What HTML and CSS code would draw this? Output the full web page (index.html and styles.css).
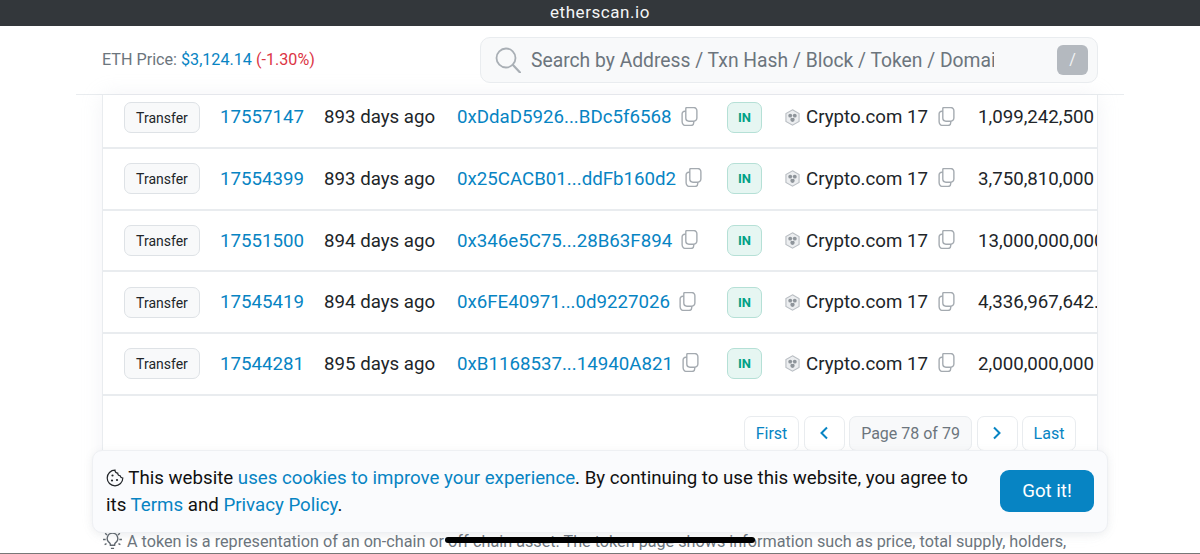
FILE: index.html
```html
<!DOCTYPE html>
<html lang="en">
<head>
<meta charset="utf-8">
<title>etherscan.io</title>
<link rel="stylesheet" href="styles.css">
</head>
<body>
<svg class="defs" width="0" height="0" aria-hidden="true">
  <symbol id="copy" viewBox="0.500 1 16 18">
    <path d="M6 1.500h6.500a3 3 0 0 1 3 3v7a3 3 0 0 1-3 3H8a3 3 0 0 1-3-3V2.500a1 1 0 0 1 1-1z" fill="none" stroke="#a4aab0" stroke-width="1.300"/>
    <path d="M5 5H4a2.500 2.500 0 0 0-2.500 2.500V15A3.500 3.500 0 0 0 5 18.500h5a2.500 2.500 0 0 0 2.500-2.500v-1.500" fill="none" stroke="#a4aab0" stroke-width="1.300"/>
  </symbol>
  <symbol id="cro" viewBox="0 0 16 18">
    <path d="M8 .8l7 4v8.400l-7 4-7-4V4.800z" fill="#eceef0" stroke="#b9bec3" stroke-width="1.200"/>
    <circle cx="5.600" cy="7" r="2.100" fill="#8f959b"/>
    <circle cx="10.400" cy="7" r="2.100" fill="#8f959b"/>
    <circle cx="8" cy="11.400" r="2.300" fill="#8f959b"/>
    <circle cx="8" cy="8.600" r="1" fill="#eceef0"/>
  </symbol>
</svg>

<div class="status-bar">etherscan.io</div>

<header class="site-header">
  <div class="price">ETH Price: <a class="link">$3,124.14</a> <span class="down">(-1.30%)</span></div>
  <div class="search">
    <svg class="search-icon" viewBox="0 0 26 26" width="26" height="26"><circle cx="11" cy="11" r="9.500" fill="none" stroke="#a9afb5" stroke-width="1.800"/><path d="M18 18l7 7.500" stroke="#a9afb5" stroke-width="2.200" stroke-linecap="round"/></svg>
    <span class="search-text">Search by Address / Txn Hash / Block / Token / Domain Name</span>
    <span class="slash">/</span>
  </div>
</header>

<main class="card">
  <div class="row row-first">
    <span class="method">Transfer</span>
    <a class="link">17557147</a>
    <span>893 days ago</span>
    <span class="hash"><a class="link">0xDdaD5926...BDc5f6568</a><svg class="copy"><use href="#copy"/></svg></span>
    <span class="in">IN</span>
    <span class="token"><svg class="cro"><use href="#cro"/></svg>Crypto.com 17<svg class="copy copy-token"><use href="#copy"/></svg></span>
    <span class="amount">1,099,242,500</span>
  </div>
  <div class="row">
    <span class="method">Transfer</span>
    <a class="link">17554399</a>
    <span>893 days ago</span>
    <span class="hash"><a class="link">0x25CACB01...ddFb160d2</a><svg class="copy"><use href="#copy"/></svg></span>
    <span class="in">IN</span>
    <span class="token"><svg class="cro"><use href="#cro"/></svg>Crypto.com 17<svg class="copy copy-token"><use href="#copy"/></svg></span>
    <span class="amount">3,750,810,000</span>
  </div>
  <div class="row">
    <span class="method">Transfer</span>
    <a class="link">17551500</a>
    <span>894 days ago</span>
    <span class="hash"><a class="link">0x346e5C75...28B63F894</a><svg class="copy"><use href="#copy"/></svg></span>
    <span class="in">IN</span>
    <span class="token"><svg class="cro"><use href="#cro"/></svg>Crypto.com 17<svg class="copy copy-token"><use href="#copy"/></svg></span>
    <span class="amount">13,000,000,000</span>
  </div>
  <div class="row">
    <span class="method">Transfer</span>
    <a class="link">17545419</a>
    <span>894 days ago</span>
    <span class="hash"><a class="link">0x6FE40971...0d9227026</a><svg class="copy"><use href="#copy"/></svg></span>
    <span class="in">IN</span>
    <span class="token"><svg class="cro"><use href="#cro"/></svg>Crypto.com 17<svg class="copy copy-token"><use href="#copy"/></svg></span>
    <span class="amount">4,336,967,642.5</span>
  </div>
  <div class="row">
    <span class="method">Transfer</span>
    <a class="link">17544281</a>
    <span>895 days ago</span>
    <span class="hash"><a class="link">0xB1168537...14940A821</a><svg class="copy"><use href="#copy"/></svg></span>
    <span class="in">IN</span>
    <span class="token"><svg class="cro"><use href="#cro"/></svg>Crypto.com 17<svg class="copy copy-token"><use href="#copy"/></svg></span>
    <span class="amount">2,000,000,000</span>
  </div>
  <nav class="pager">
    <a class="page-btn link page-first">First</a>
    <a class="page-btn link page-arrow"><svg viewBox="0 0 10 14" width="10" height="14"><path d="M8 1.500L2.500 7 8 12.500" fill="none" stroke="#0784c3" stroke-width="2"/></svg></a>
    <span class="page-btn page-current">Page 78 of 79</span>
    <a class="page-btn link page-arrow"><svg viewBox="0 0 10 14" width="10" height="14"><path d="M2 1.500L7.500 7 2 12.500" fill="none" stroke="#0784c3" stroke-width="2"/></svg></a>
    <a class="page-btn link page-last">Last</a>
  </nav>
</main>

<p class="tip">
  <svg class="bulb" viewBox="0 1 20 18" width="21" height="19"><path d="M10 3a5 5 0 0 0-3 9c.8.700 1 1.200 1 2.500h4c0-1.300.2-1.800 1-2.500a5 5 0 0 0-3-9zM8.500 17.500h3" fill="none" stroke="#5f676e" stroke-width="1.300"/><path d="M1 9h2.500M16.500 9H19M3 3l1.800 1.800M17 3l-1.800 1.800M2.500 14l1.800-1M17.500 14l-1.800-1" stroke="#5f676e" stroke-width="1.300"/></svg>
  A token is a representation of an on-chain or off-chain asset. The token page shows information such as price, total supply, holders, transfers and social links.
</p>

<div class="cookie">
  <p class="cookie-text"><svg class="cookie-icon" viewBox="0 0 18 18" width="18" height="18"><path d="M9 1.200a2.800 2.800 0 0 0 2.700 3 2.800 2.800 0 0 0 2.500 2.600A2.800 2.800 0 0 0 16.800 9 7.800 7.800 0 1 1 9 1.200z" fill="none" stroke="#212529" stroke-width="1.200"/><circle cx="6.500" cy="6.500" r="1.100" fill="#212529"/><circle cx="11" cy="11" r="1.100" fill="#212529"/><circle cx="6" cy="11.500" r="1.100" fill="#212529"/></svg> This website <a class="link">uses cookies to improve your experience</a>. By continuing to use this website, you agree to its <a class="link">Terms</a> and <a class="link">Privacy Policy</a>.</p>
  <button class="got-it">Got it!</button>
</div>

<div class="home-indicator"></div>
<div class="bottom-line"></div>
</body>
</html>
```

FILE: styles.css
```css
* { box-sizing: border-box; }
html, body { height: 100%; }
body {
  margin: 0;
  height: 554px;
  overflow: hidden;
  position: relative;
  background: #fff;
  color: #212529;
  font-family: Roboto, "Liberation Sans", sans-serif;
  font-size: 18.700px;
}
.defs { position: absolute; }
.link { color: #0784c3; text-decoration: none; }

.status-bar {
  height: 26px;
  background: #33373b;
  color: #f4f5f6;
  font-size: 17px;
  line-height: 25px;
  letter-spacing: .55px;
  text-align: center;
}

.site-header {
  margin: 0 76px;
  height: 69px;
  padding: 11px 26px;
  border-bottom: 1px solid #e9ecef;
  display: flex;
  justify-content: space-between;
  align-items: flex-start;
}
.price {
  font-size: 16.150px;
  line-height: 46px;
  color: #6c757d;
}
.down { color: #dc3545; }
.search {
  width: 618px;
  height: 46px;
  background: #f8f9fa;
  border: 1px solid #e9ecef;
  border-radius: 10px;
  display: flex;
  align-items: center;
  padding: 0 9px 0 14px;
}
.search-icon { flex: none; margin-right: 10px; }
.search-text {
  width: 463px;
  white-space: nowrap;
  overflow: hidden;
  font-size: 19.300px;
  color: #6c757d;
}
.slash {
  margin-left: auto;
  width: 31px;
  height: 30px;
  border-radius: 6px;
  background: #b4b9bf;
  color: #f2f3f4;
  font-size: 16px;
  line-height: 30px;
  text-align: center;
}

.card {
  margin: 0 102px;
  height: 432px;
  border: solid #e9ecef;
  border-width: 0 1px;
  box-shadow: 0 0 20px rgba(189, 197, 209, .2);
  overflow: hidden;
}
.row {
  height: 61.700px;
  padding-left: 21px;
  border-bottom: 2px solid #e9ecef;
  display: grid;
  grid-template-columns: 96px 104px 133px 270px 58px 193px 119px;
  align-items: center;
  white-space: nowrap;
}
.row-first { height: 54px; padding-bottom: 8px; }
.method {
  width: 76px;
  height: 31px;
  background: #f8f9fa;
  border: 1px solid #dee2e6;
  border-radius: 7px;
  font-size: 14px;
  line-height: 30px;
  text-align: center;
}
.hash, .token { display: flex; align-items: center; }
.copy { width: 17px; height: 19px; margin: -2px 0 0 9px; flex: none; }
.copy-token { margin-left: 10px; }
.in {
  width: 35px;
  height: 31px;
  background: #e6f6f2;
  border: 1px solid #b5e0d6;
  border-radius: 7px;
  color: #00a186;
  font-size: 13px;
  font-weight: 700;
  line-height: 29px;
  text-align: center;
}
.cro { width: 15px; height: 17px; margin-right: 6px; flex: none; }
.amount { overflow: hidden; }

.pager {
  padding: 20px 21px 0 0;
  display: flex;
  justify-content: flex-end;
  gap: 4.500px;
}
.page-btn {
  height: 35px;
  border: 1px solid #e9ecef;
  border-radius: 7px;
  font-size: 16px;
  line-height: 33px;
  text-align: center;
}
.page-first { width: 55px; }
.page-last { width: 54px; }
.page-arrow {
  width: 41px;
  display: flex;
  align-items: center;
  justify-content: center;
}
.page-current { width: 123px; background: #f8f9fa; color: #6c757d; }

.tip {
  margin: 0 102px;
  padding-top: 3px;
  font-size: 16.200px;
  line-height: 24px;
  color: #6c757d;
}
.bulb { vertical-align: -3px; }

.cookie {
  position: absolute;
  left: 92px;
  top: 450px;
  width: 1016px;
  height: 82.500px;
  padding: 0 13px;
  background: #fafbfd;
  border: 1px solid #eef0f3;
  border-radius: 10px;
  box-shadow: 0 2px 8px rgba(120, 130, 140, .12);
  display: flex;
  align-items: center;
  justify-content: space-between;
}
.cookie-text {
  margin: 0;
  padding-top: 2px;
  width: 872px;
  font-size: 18.700px;
  line-height: 27px;
  color: #111;
}
.cookie-icon { vertical-align: -3px; }
.got-it {
  width: 94px;
  height: 42px;
  border: 0;
  border-radius: 9px;
  background: #0784c3;
  color: #fff;
  font-family: inherit;
  font-size: 18.700px;
}

.home-indicator {
  position: absolute;
  left: 445px;
  top: 537px;
  width: 310px;
  height: 6px;
  border-radius: 3px;
  background: #000;
}
.bottom-line {
  position: absolute;
  left: 0;
  right: 0;
  bottom: 0;
  height: 1px;
  background: #777;
}
```
